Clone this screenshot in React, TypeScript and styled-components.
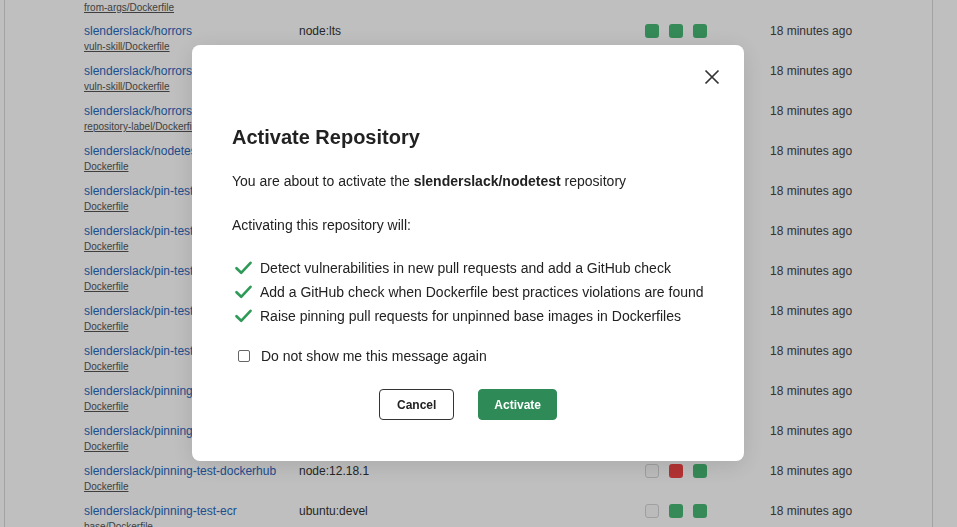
import React from "react";
import styled, { createGlobalStyle } from "styled-components";

const GlobalStyle = createGlobalStyle`
  html, body {
    margin: 0;
    padding: 0;
    background: #ffffff;
    font-family: "Liberation Sans", Arial, sans-serif;
    overflow: hidden;
  }
`;

type Status = "ok" | "fail" | "none";

const rows: {
  repo: string;
  file: string;
  image?: string;
  status?: Status[];
}[] = [
  { repo: "slenderslack/horrors", file: "vuln-skill/Dockerfile", image: "node:lts", status: ["ok", "ok", "ok"] },
  { repo: "slenderslack/horrors", file: "vuln-skill/Dockerfile" },
  { repo: "slenderslack/horrors", file: "repository-label/Dockerfile" },
  { repo: "slenderslack/nodetest", file: "Dockerfile" },
  { repo: "slenderslack/pin-test", file: "Dockerfile" },
  { repo: "slenderslack/pin-test", file: "Dockerfile" },
  { repo: "slenderslack/pin-test", file: "Dockerfile" },
  { repo: "slenderslack/pin-test", file: "Dockerfile" },
  { repo: "slenderslack/pin-test", file: "Dockerfile" },
  { repo: "slenderslack/pinning", file: "Dockerfile" },
  { repo: "slenderslack/pinning", file: "Dockerfile" },
  { repo: "slenderslack/pinning-test-dockerhub", file: "Dockerfile", image: "node:12.18.1", status: ["none", "fail", "ok"] },
  { repo: "slenderslack/pinning-test-ecr", file: "base/Dockerfile", image: "ubuntu:devel", status: ["none", "ok", "ok"] },
];

const features = [
  "Detect vulnerabilities in new pull requests and add a GitHub check",
  "Add a GitHub check when Dockerfile best practices violations are found",
  "Raise pinning pull requests for unpinned base images in Dockerfiles",
];

export default function App() {
  return (
    <>
      <GlobalStyle />
      <Page>
        <Panel>
          {/* tail of the row scrolled above the viewport */}
          <TailRow>
            <FileLink>from-args/Dockerfile</FileLink>
          </TailRow>
          {rows.map((r, i) => (
            <Row key={i}>
              <NameCell>
                <RepoLink>{r.repo}</RepoLink>
                <FileLink>{r.file}</FileLink>
              </NameCell>
              <ImageCell>{r.image}</ImageCell>
              <StatusCell>
                {r.status?.map((s, j) => (
                  <Square key={j} $status={s} />
                ))}
              </StatusCell>
              <TimeCell>18 minutes ago</TimeCell>
            </Row>
          ))}
        </Panel>
      </Page>

      <Overlay>
        <Modal>
          <ModalHeader>
            <CloseButton aria-label="Close">
              <svg width="16" height="16" viewBox="0 0 16 16">
                <path d="M1.5 1.5 L14.5 14.5 M14.5 1.5 L1.5 14.5" stroke="#333" strokeWidth="1.7" fill="none" />
              </svg>
            </CloseButton>
          </ModalHeader>
          <ModalBody>
            <Title>Activate Repository</Title>
            <Text $gap={22}>
              You are about to activate the <b>slenderslack/nodetest</b> repository
            </Text>
            <Text $gap={24}>Activating this repository will:</Text>
            <FeatureList>
              {features.map((f) => (
                <Feature key={f}>
                  <svg width="17" height="14" viewBox="0 0 17 14">
                    <path d="M1.5 7.2 L6.2 11.8 L15.5 1.8" stroke="#2f9a58" strokeWidth="2.6" fill="none" strokeLinecap="round" strokeLinejoin="round" />
                  </svg>
                  <span>{f}</span>
                </Feature>
              ))}
            </FeatureList>
            <CheckRow>
              <Box type="checkbox" />
              <span>Do not show me this message again</span>
            </CheckRow>
            <Actions>
              <Button>Cancel</Button>
              <Button $primary>Activate</Button>
            </Actions>
          </ModalBody>
        </Modal>
      </Overlay>
    </>
  );
}

const Page = styled.div`
  padding: 0 24px 0 4px;
  height: 100vh;
  box-sizing: border-box;
`;

const Panel = styled.div`
  border-left: 1px solid #d9d9d9;
  border-right: 1px solid #d9d9d9;
  padding-left: 79px;
  height: 100%;
  box-sizing: border-box;
`;

const TailRow = styled.div`
  height: 20px;
  display: flex;
  align-items: flex-start;
`;

const Row = styled.div`
  display: grid;
  grid-template-columns: 215px 346px 125px 1fr;
  height: 40px;
  box-sizing: border-box;
  padding-top: 3px;
  font-size: 12px;
`;

const NameCell = styled.div`
  display: flex;
  flex-direction: column;
  white-space: nowrap;
  overflow: hidden;
`;

const RepoLink = styled.a`
  color: #2a68bd;
  line-height: 16px;
  cursor: pointer;
`;

const FileLink = styled.a`
  color: #555;
  font-size: 10px;
  line-height: 15px;
  text-decoration: underline;
`;

const ImageCell = styled.div`
  color: #333;
  line-height: 16px;
`;

const StatusCell = styled.div`
  display: flex;
  gap: 10px;
  padding-top: 1px;
`;

const Square = styled.span<{ $status: Status }>`
  width: 14px;
  height: 14px;
  box-sizing: border-box;
  border-radius: 3px;
  background: ${(p) => (p.$status === "ok" ? "#47b874" : p.$status === "fail" ? "#f04444" : "#fafafa")};
  border: ${(p) => (p.$status === "none" ? "1px solid #d4d4d4" : "none")};
`;

const TimeCell = styled.div`
  color: #444;
  line-height: 16px;
`;

const Overlay = styled.div`
  position: fixed;
  inset: 0;
  background: rgba(0, 0, 0, 0.25);
  display: flex;
  justify-content: center;
  align-items: flex-start;
  padding: 45px 21px 0 0;
`;

const Modal = styled.div`
  width: 552px;
  background: #fff;
  border-radius: 8px;
  box-shadow: 0 4px 24px rgba(0, 0, 0, 0.12);
  padding-bottom: 41px;
  color: #222;
`;

const ModalHeader = styled.div`
  height: 64px;
  display: flex;
  justify-content: flex-end;
  align-items: flex-start;
  padding: 24px 24px 0 0;
  box-sizing: border-box;
`;

const CloseButton = styled.button`
  border: none;
  background: none;
  padding: 0;
  width: 16px;
  height: 16px;
  cursor: pointer;
  display: flex;
`;

const ModalBody = styled.div`
  padding: 0 40px;
`;

const Title = styled.h2`
  margin: 16px 0 0;
  font-size: 20px;
  line-height: 24px;
  font-weight: 700;
  color: #222;
`;

const Text = styled.p<{ $gap: number }>`
  margin: ${(p) => p.$gap}px 0 0;
  font-size: 14px;
  line-height: 20px;
  b {
    font-weight: 700;
  }
`;

const FeatureList = styled.ul`
  list-style: none;
  margin: 21px 0 0;
  padding: 0;
`;

const Feature = styled.li`
  display: flex;
  align-items: center;
  gap: 8px;
  height: 24px;
  font-size: 14px;
  padding-left: 3px;
  white-space: nowrap;
  svg {
    flex: none;
  }
`;

const CheckRow = styled.label`
  display: flex;
  align-items: center;
  gap: 11px;
  margin-top: 18px;
  height: 20px;
  font-size: 14px;
  padding-left: 6px;
`;

const Box = styled.input`
  appearance: none;
  margin: 0;
  width: 12px;
  height: 12px;
  border: 1px solid #666;
  border-radius: 2px;
  background: #fff;
`;

const Actions = styled.div`
  display: flex;
  justify-content: center;
  gap: 24px;
  margin-top: 23px;
`;

const Button = styled.button<{ $primary?: boolean }>`
  height: 31px;
  padding: 0 ${(p) => (p.$primary ? "15px" : "17px")};
  font-family: "Liberation Sans", Arial, sans-serif;
  font-size: 12px;
  font-weight: 700;
  border-radius: 4px;
  cursor: pointer;
  border: 1px solid ${(p) => (p.$primary ? "#2e8b57" : "#333")};
  background: ${(p) => (p.$primary ? "#2e8b57" : "#fff")};
  color: ${(p) => (p.$primary ? "#fff" : "#222")};
`;
